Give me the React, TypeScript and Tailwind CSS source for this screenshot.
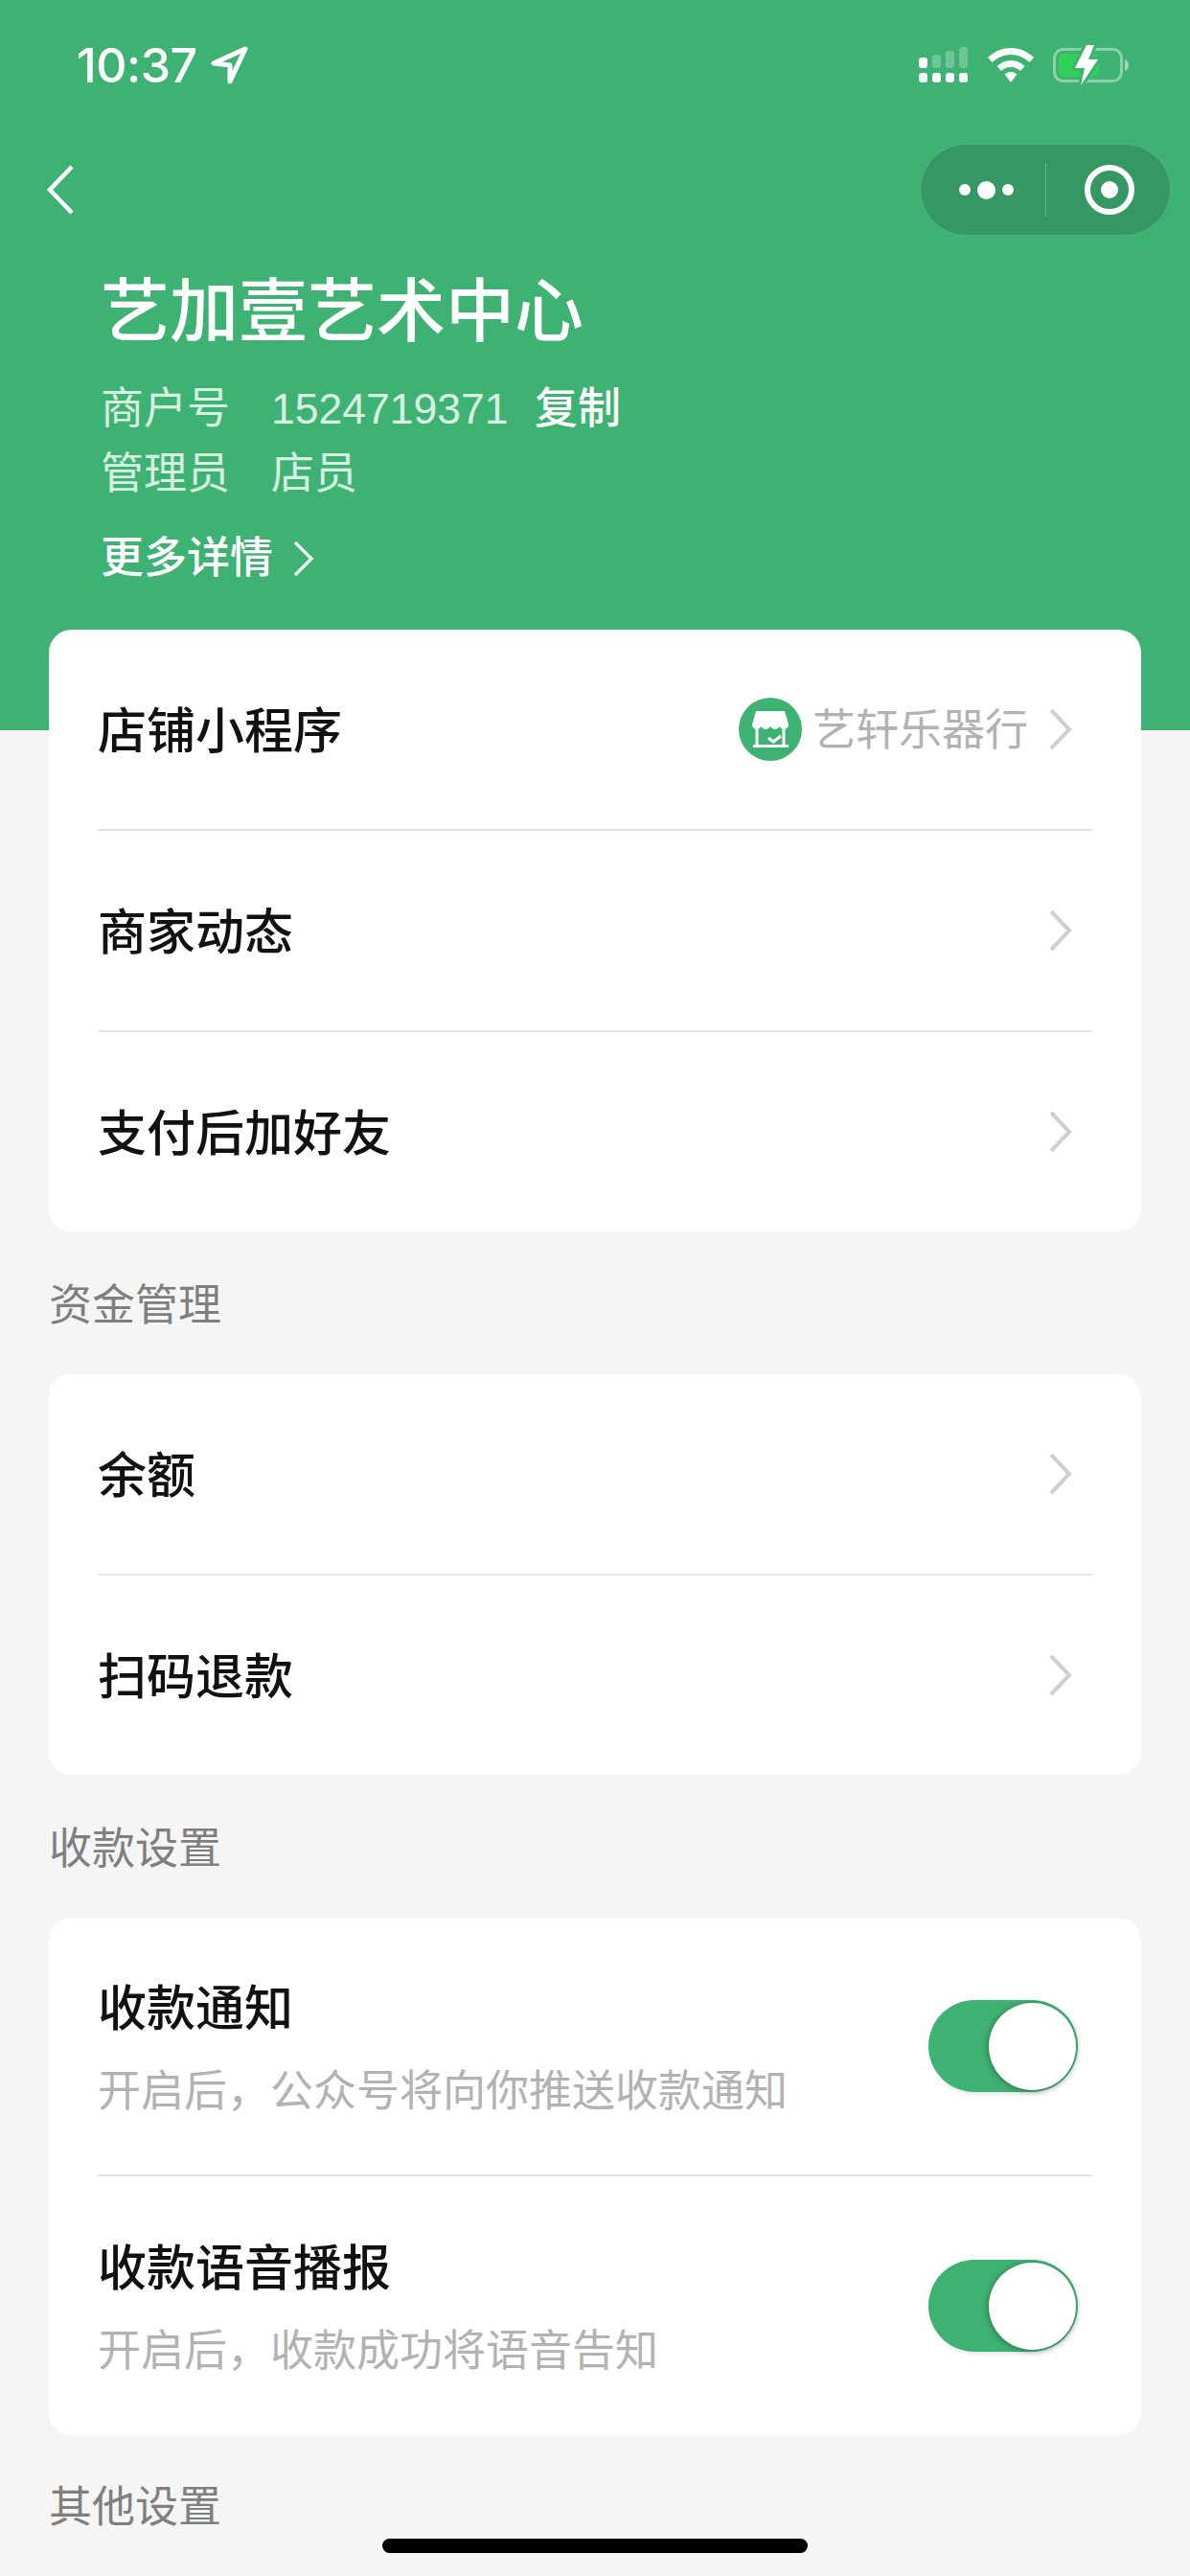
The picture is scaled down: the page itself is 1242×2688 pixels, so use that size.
import React from 'react';

const cjk = "[font-family:'Liberation_Sans','Noto_Sans_CJK_SC',sans-serif]";

function Chevron() {
  return (
    <svg width="26" height="46" viewBox="0 0 26 46" fill="none" className="shrink-0">
      <path d="M3 3 L22 23 L3 43" stroke="#cfcfcf" strokeWidth="4" />
    </svg>
  );
}

function Divider() {
  return <div className="h-[2px] mx-[51px] bg-[#e5e5e5]" />;
}

function StoreIcon() {
  return (
    <svg width="66" height="66" viewBox="0 0 66 66" className="shrink-0">
      <circle cx="33" cy="33" r="33" fill="#3eb272" />
      <path d="M18 14 H48 L52 28 H14 Z" fill="#fff" />
      <path
        d="M14 28 H52 V30 C49 34 45 34 42.500 30 C40 34 36 34 33 30 C30 34 26 34 23.500 30 C21 34 17 34 14 30 Z"
        fill="#fff"
      />
      <path d="M19 33 V50 M47 33 V50" stroke="#fff" strokeWidth="3" />
      <path d="M15 50.500 H52" stroke="#fff" strokeWidth="3" />
      <path d="M31 42 L36 46 L44 40" stroke="#fff" strokeWidth="3" fill="none" />
    </svg>
  );
}

function ArrowRow({ title, right }: { title: string; right?: React.ReactNode }) {
  return (
    <div className="h-[208px] pl-[51px] pr-[71px] flex items-center justify-between">
      <span className="pt-[5px] text-[51px] leading-[68px] font-medium text-[#111]">{title}</span>
      <div className="flex items-center">
        {right}
        <Chevron />
      </div>
    </div>
  );
}

function Toggle() {
  return (
    <div className="w-[156px] h-[96px] rounded-full bg-[#3eb272] flex items-center justify-end pr-[2px] shrink-0 shadow-[1px_2px_5px_rgba(0,0,0,0.12)]">
      <div className="w-[91px] h-[91px] rounded-full bg-white shadow-[-1px_1px_6px_rgba(0,0,0,0.35)]" />
    </div>
  );
}

function ToggleRow({ title, desc, tall }: { title: string; desc: string; tall?: boolean }) {
  return (
    <div className={`${tall ? 'h-[270px]' : 'h-[268px]'} pl-[51px] pr-[66px] flex items-center justify-between`}>
      <div className="pt-[9px] flex flex-col gap-[18px]">
        <span className="text-[51px] leading-[68px] font-medium text-[#111]">{title}</span>
        <span className="text-[45px] leading-[68px] text-[#b2b2b2]">{desc}</span>
      </div>
      <Toggle />
    </div>
  );
}

function SectionLabel({ text, last }: { text: string; last?: boolean }) {
  return (
    <div className={`h-[149px] pl-[51px] ${last ? 'pt-[3px]' : 'pt-[6px]'} flex items-center text-[45px] leading-[68px] text-[#7f7f7f]`}>
      {text}
    </div>
  );
}

function Card({ children }: { children: React.ReactNode }) {
  return <div className="mx-[51px] bg-white rounded-[24px]">{children}</div>;
}

function StatusBar() {
  return (
    <div className="h-[136px] pl-[80px] pr-[63px] flex items-center justify-between text-white">
      <div className="flex items-center gap-[14px]">
        <span className="text-[50px] leading-[60px] font-medium tracking-[-0.5px] [font-family:Inter,sans-serif]">
          10:37
        </span>
        <svg width="40" height="40" viewBox="0 0 40 40" fill="none">
          <path
            d="M36 3 L3 18 L20 20 L20 37 Z"
            stroke="#fff"
            strokeWidth="5"
            strokeLinejoin="round"
          />
        </svg>
      </div>
      <div className="flex items-center gap-[20px]">
        <svg width="52" height="38" viewBox="0 0 52 38" fill="#fff">
          <rect x="0" y="11" width="9" height="11" rx="3" />
          <rect x="14" y="8" width="9" height="14" rx="3" opacity="0.25" />
          <rect x="28" y="4" width="9" height="18" rx="3" opacity="0.25" />
          <rect x="42" y="0" width="9" height="22" rx="3" opacity="0.25" />
          <rect x="0" y="27" width="9" height="10" rx="3" />
          <rect x="14" y="27" width="9" height="10" rx="3" />
          <rect x="28" y="27" width="9" height="10" rx="3" />
          <rect x="42" y="27" width="9" height="10" rx="3" />
        </svg>
        <svg width="48" height="36" viewBox="0 0 48 36" fill="#fff">
          <path d="M24 0 C33 0 41 3.500 48 10 L43.500 15 C38 10 31.500 7 24 7 C16.500 7 10 10 4.500 15 L0 10 C7 3.500 15 0 24 0 Z" />
          <path d="M24 13 C29.500 13 34 15 38.500 19 L34 24 C31 21.500 28 20 24 20 C20 20 17 21.500 14 24 L9.500 19 C14 15 18.500 13 24 13 Z" />
          <path d="M24 25 C26.500 25 28.500 26 30.500 27.500 L24 36 L17.500 27.500 C19.500 26 21.500 25 24 25 Z" />
        </svg>
        <svg width="80" height="42" viewBox="0 0 80 42" fill="none">
          <rect x="1.500" y="4.500" width="70" height="33" rx="9" stroke="#fff" strokeOpacity="0.4" strokeWidth="3" />
          <rect x="6" y="9" width="42" height="24" rx="5" fill="#30d158" />
          <path d="M75 15 C78 16 79 18 79 21 C79 24 78 26 75 27 Z" fill="#fff" fillOpacity="0.5" />
          <path d="M35 0 L23 24 L33 24 L29 42 L47 15 L37 15 L43 0 Z" fill="#3eb272" stroke="#3eb272" strokeWidth="6" strokeLinejoin="round" />
          <path d="M35 0 L23 24 L33 24 L29 42 L47 15 L37 15 L43 0 Z" fill="#fff" />
        </svg>
      </div>
    </div>
  );
}

function NavBar() {
  return (
    <div className="mt-[14px] h-[96px] pl-[48px] pr-[20px] flex items-center justify-between">
      <svg width="30" height="52" viewBox="0 0 30 52" fill="none">
        <path d="M27 2 L4 26 L27 50" stroke="#fff" strokeWidth="4.500" />
      </svg>
      <div className="w-[262px] h-[96px] rounded-full bg-[#359862] border border-white/20 flex items-center">
        <div className="w-[130px] flex items-center justify-center gap-[7px] pl-[6px]">
          <span className="w-[12px] h-[12px] rounded-full bg-white" />
          <span className="w-[19px] h-[19px] rounded-full bg-white" />
          <span className="w-[12px] h-[12px] rounded-full bg-white" />
        </div>
        <div className="w-[1px] h-[56px] bg-white/25" />
        <div className="flex-1 flex items-center justify-center pl-[2px]">
          <div className="w-[52px] h-[52px] rounded-full border-[6px] border-white flex items-center justify-center">
            <div className="w-[18px] h-[18px] rounded-full bg-white" />
          </div>
        </div>
      </div>
    </div>
  );
}

export default function App() {
  return (
    <div className={`relative w-[1242px] h-[2688px] overflow-hidden bg-[#f5f5f5] ${cjk}`}>
      <div className="h-[762px] bg-[#3eb272] text-white">
        <StatusBar />
        <NavBar />
        <div className="pl-[105px]">
          <div className="mt-[43px] text-[72px] leading-[72px] font-medium">艺加壹艺术中心</div>
          <div className="mt-[32px] flex items-center text-[45px] leading-[68px]">
            <span className="w-[178px] text-white/80">商户号</span>
            <span className="w-[275px] text-[44.500px] text-white/80">1524719371</span>
            <span className="font-medium">复制</span>
          </div>
          <div className="flex items-center text-[45px] leading-[68px] text-white/80">
            <span className="w-[178px]">管理员</span>
            <span>店员</span>
          </div>
          <div className="mt-[20px] flex items-center gap-[20px] text-[45px] leading-[68px] font-medium">
            <span>更多详情</span>
            <svg width="24" height="38" viewBox="0 0 24 38" fill="none">
              <path d="M3 2 L20 19 L3 36" stroke="#fff" strokeOpacity="0.9" strokeWidth="3.500" />
            </svg>
          </div>
        </div>
      </div>

      <div className="-mt-[105px]">
        <Card>
          <ArrowRow
            title="店铺小程序"
            right={
              <div className="flex items-center mr-[21px]">
                <StoreIcon />
                <span className="ml-[11px] pt-[4px] text-[45px] leading-[68px] text-[#b2b2b2]">艺轩乐器行</span>
              </div>
            }
          />
          <Divider />
          <ArrowRow title="商家动态" />
          <Divider />
          <ArrowRow title="支付后加好友" />
        </Card>

        <SectionLabel text="资金管理" />
        <Card>
          <ArrowRow title="余额" />
          <Divider />
          <ArrowRow title="扫码退款" />
        </Card>

        <SectionLabel text="收款设置" />
        <Card>
          <ToggleRow title="收款通知" desc="开启后，公众号将向你推送收款通知" />
          <Divider />
          <ToggleRow title="收款语音播报" desc="开启后，收款成功将语音告知" tall />
        </Card>

        <SectionLabel text="其他设置" last />
      </div>

      <div className="absolute left-[399px] bottom-[24px] w-[444px] h-[15px] rounded-full bg-black" />
    </div>
  );
}
